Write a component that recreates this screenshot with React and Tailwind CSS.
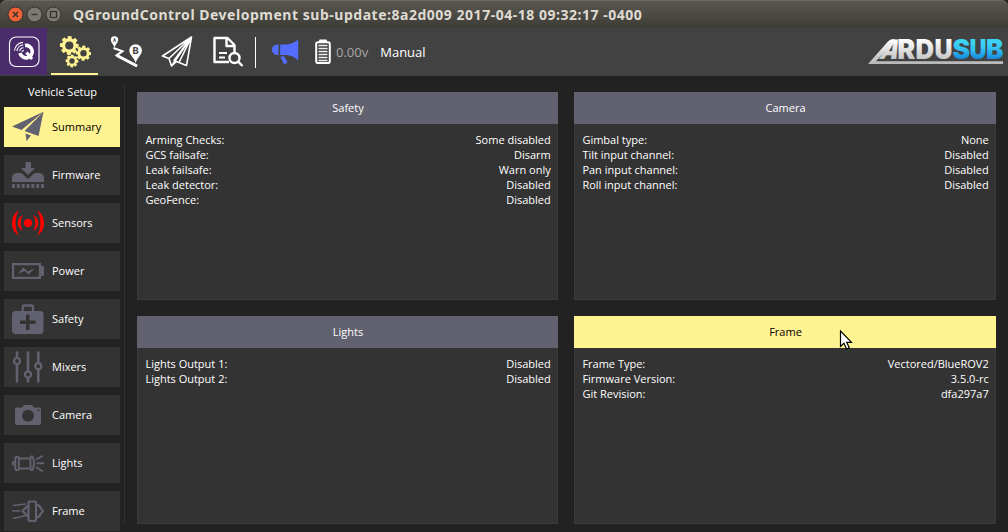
import React from "react";

const SLATE = "#62616f";

function AppLogo() {
  return (
    <svg width="32" height="32" viewBox="0 0 32 32" fill="none" stroke="#fff">
      <rect x="1.500" y="1" width="29.500" height="29.500" rx="6.500" strokeWidth="1.100" />
      <path d="M17 9.500a6.200 6.200 0 1 1-5 7.500" strokeWidth="3.600" />
      <path d="M18.500 16.500l5.500 6.500" strokeWidth="3.200" />
      <path d="M15.500 11.800a4 4 0 0 0-3.800 3.400M15.200 9a6.600 6.600 0 0 0-6.200 6M15 6.400a9 9 0 0 0-8.500 8.300M16 14.200a2 2 0 0 0-1.800 1.800" strokeWidth="1.100" />
    </svg>
  );
}

function Gear({ cx, cy, r, w, hole }) {
  const teeth = [0, 45, 90, 135];
  return (
    <g transform={`translate(${cx} ${cy})`}>
      {teeth.map((a) => (
        <rect key={a} x={-w / 2} y={-r} width={w} height={r * 2} rx="0.8" transform={`rotate(${a + 3})`} />
      ))}
      <circle r={r * 0.78} />
      <circle r={hole} fill="#424242" />
    </g>
  );
}

function Gears() {
  return (
    <svg width="32" height="32" viewBox="0 0 32 32" fill="#fff291">
      <Gear cx={10.3} cy={9.5} r={9.4} w={4} hole={4.1} />
      <Gear cx={24.5} cy={17.2} r={7.6} w={3.3} hole={3.2} />
      <Gear cx={13} cy={25} r={6.4} w={2.9} hole={2.7} />
    </svg>
  );
}

function PlanIcon() {
  return (
    <svg width="32" height="32" viewBox="0 0 32 32" fill="#fff">
      <path d="M4.500 11.500C4 9 .8 6.500 .8 4A3.700 3.700 0 0 1 8.200 4C8.200 6.500 5 9 4.500 11.500z" />
      <path d="M25.700 27C24.500 22 19.300 19 19.300 14.500A6.300 6.300 0 0 1 31.900 14.500C31.900 19 27 22 25.700 27z" />
      <path d="M3.500 12L12.500 15.200 6.500 19.300 27 30" fill="none" stroke="#fff" strokeWidth="2" />
      <path d="M7 19.500L27 30" fill="none" stroke="#fff" strokeWidth="2.800" />
      <text x="4.500" y="5.800" fontSize="4.500" textAnchor="middle" fontWeight="700" fill="#424242" fontFamily="Roboto, sans-serif">A</text>
      <text x="25.600" y="18" fontSize="9.500" textAnchor="middle" fontWeight="800" fill="#424242" fontFamily="Roboto, sans-serif">B</text>
    </svg>
  );
}

function FlyIcon() {
  return (
    <svg width="32" height="32" viewBox="0 0 32 32" fill="none" stroke="#fff" strokeWidth="1.600" strokeLinejoin="round">
      <path d="M30.500 1L1.500 20 8 22.500zM30.500 1L13 24.500 25.500 29.500zM8 22.500L10.500 30 30.500 1M10.500 30L15.500 25.500M30.500 1L18 26.500" />
    </svg>
  );
}

function AnalyzeIcon() {
  return (
    <svg width="32" height="32" viewBox="0 0 32 32" fill="none" stroke="#fff" strokeWidth="2.400">
      <path d="M17 26H2.500V2H15.500L22.500 9V16M14.500 2V10H22.500" strokeLinejoin="round" />
      <path d="M7 17H15M7 21.500H13" strokeWidth="1.800" />
      <circle cx="22.500" cy="22" r="5" />
      <path d="M26 25.500L30.500 30" />
    </svg>
  );
}

function Megaphone() {
  return (
    <svg width="28" height="26" viewBox="0 0 28 26" fill="#536dff">
      <path d="M6.500 5.500V16H5.200A5 5 0 0 1 5.200 5.500zM8.200 5.500H15C20 5 24 2.500 26.200 .3V21.500C24 19 20 16.500 15 16H8.200zM8.300 17.800L12 17.200 15.200 22.500 14.500 24.500 11.800 25z" />
    </svg>
  );
}

function BatteryLevel() {
  return (
    <svg width="16" height="26" viewBox="0 0 16 26">
      <path d="M4 1.500Q4 .5 5 .5H11Q12 .5 12 1.500V3H4z" fill="#fff" />
      <rect x="1.200" y="3.200" width="13.600" height="20.800" rx="1.800" fill="none" stroke="#fff" strokeWidth="2" />
      <path d="M3.500 6.500H12.500M3.500 9.500H12.500M3.500 12.500H12.500M3.500 15.500H12.500M3.500 18.500H12.500M3.500 21.500H12.500" stroke="#eee" strokeWidth="1.600" />
    </svg>
  );
}

const brandLetters = [
  ["R", 31.3, 18, "url(#silver)"],
  ["D", 49.6, 18.6, "url(#silver)"],
  ["U", 68.4, 18, "url(#silver)"],
  ["S", 86.6, 17.6, "url(#sea)"],
  ["U", 103.6, 17, "url(#sea)"],
  ["B", 120, 17.4, "url(#sea)"],
];

function Brand() {
  return (
    <svg width="138" height="44" viewBox="0 -8 138 44" fontFamily="Inter, sans-serif" fontSize="26.800" fontWeight="900">
      <defs>
        <linearGradient id="silver" gradientUnits="userSpaceOnUse" x1="0" y1="1" x2="0" y2="26">
          <stop offset="0" stopColor="#fff" />
          <stop offset="1" stopColor="#b8b8b8" />
        </linearGradient>
        <linearGradient id="sea" gradientUnits="userSpaceOnUse" x1="0" y1="1" x2="0" y2="21">
          <stop offset="0.200" stopColor="#3cd4f5" />
          <stop offset="0.550" stopColor="#2fbcf0" />
          <stop offset="1" stopColor="#1688dc" />
        </linearGradient>
      </defs>
      <path d="M2 26L22 3.500Q24 1.300 27 1.300H29L10 23.200H137V26z" fill="url(#silver)" />
      <text x="20.200" y="20.900" textLength="18.500" lengthAdjust="spacingAndGlyphs" transform="skewX(-21)" fill="url(#silver)">A</text>
      {brandLetters.map(([letter, x, width, fill]) => (
        <text key={x} x={x} y="20.900" textLength={width} lengthAdjust="spacingAndGlyphs" fill={fill}>
          {letter}
        </text>
      ))}
    </svg>
  );
}

const icons = {
  Summary: (
    <path d="M31.500 .8L0 15.500 9.500 19zM31.500 .8L12.500 20 26.500 25zM13.500 22.500L19 24.500 14.500 30z" fill={SLATE} />
  ),
  Firmware: (
    <g fill={SLATE} transform="translate(0 1)">
      <path d="M13.500 2H19V8H23L16 15 9 8H13.500z" />
      <path d="M4 13H9.500L16 19 22.500 13H28Q32 14 32 18V22H0V18Q0 14 4 13zM0 24H3V28H0zM4.800 24H7.800V28H4.800zM9.700 24H12.700V28H9.700zM14.500 24H17.500V28H14.500zM19.300 24H22.300V28H19.300zM24.200 24H27.200V28H24.200zM29 24H32V28H29z" />
    </g>
  ),
  Sensors: (
    <g fill="#f00">
      <circle cx="16" cy="16" r="4.200" />
      <path d="M11 8C4 11 4 21 11 24 8 20 8 12 11 8zM21 8C28 11 28 21 21 24 24 20 24 12 21 8zM7 3C-2.500 9 -2.500 23 7 29 2.500 22 2.500 10 7 3zM25 3C34.500 9 34.500 23 25 29 29.500 22 29.500 10 25 3z" />
    </g>
  ),
  Power: (
    <g fill={SLATE}>
      <path d="M0 8H29V11H31Q32 11 32 12V20Q32 21 31 21H29V24H0zM2.200 10.200V21.800H26.800V10.200z" fillRule="evenodd" />
      <path d="M5.500 19L11.500 12.500 15.500 16.500 22.500 13.500 16.500 19.500 12.500 16z" />
    </g>
  ),
  Safety: (
    <g>
      <path d="M10.700 8V4Q10.700 2.500 12.200 2.500H19.500Q21 2.500 21 4V8" fill="none" stroke={SLATE} strokeWidth="2.300" />
      <rect x="0" y="8" width="31.500" height="23" rx="3.500" fill={SLATE} />
      <path d="M14 11.500H17.500V17.500H23.500V21H17.500V27H14V21H8V17.500H14z" fill="#333" />
    </g>
  ),
  Mixers: (
    <g fill="none" stroke={SLATE} strokeWidth="2.600" strokeLinecap="round">
      <path d="M5 1.500V6.500M5 13.500V30.500M16 1.500V20M16 27V30.500M26.300 1.500V12M26.300 18.500V30.500" />
      <circle cx="5" cy="10" r="3" strokeWidth="2.200" />
      <circle cx="16" cy="23.500" r="3" strokeWidth="2.200" />
      <circle cx="26.300" cy="15.200" r="3" strokeWidth="2.200" />
    </g>
  ),
  Camera: (
    <g>
      <path d="M5 8.500H10L12 6H20L22 8.500H27Q29 8.500 29 10.500V24Q29 26 27 26H5Q3 26 3 24V10.500Q3 8.500 5 8.500z" fill={SLATE} />
      <circle cx="16" cy="16.800" r="6" fill="#333" />
      <circle cx="26.500" cy="11.300" r="1" fill="#333" />
    </g>
  ),
  Lights: (
    <g fill="none" stroke={SLATE} strokeWidth="1.900">
      <path d="M0 16.300H2.500" strokeWidth="4" />
      <rect x="3.300" y="10" width="3.500" height="13" rx="1" />
      <path d="M7 11.500H18.500M7 21.500H18.500M18.500 9.500V23M18.500 9.500H20.500Q23.500 16.500 20.500 23H18.500" />
      <path d="M24 12.500L30.800 8.800M24.500 16.300H32M24 20L30.800 24.500" />
    </g>
  ),
  Frame: (
    <g fill="none" stroke={SLATE} strokeWidth="2.200">
      <rect x="16.500" y="6.500" width="7.500" height="19.500" rx="1" />
      <path d="M16 10.500L10.500 16 16 21.500M25 10Q28 10 28.500 13L31 16 28.500 19Q28 22 25 22" />
      <path d="M1 10.500L14 9M0 16H8M1 23.500L14 20.500" strokeWidth="1.600" />
    </g>
  ),
};

const navItems = ["Summary", "Firmware", "Sensors", "Power", "Safety", "Mixers", "Camera", "Lights", "Frame"];

function NavButton({ name, active }) {
  return (
    <button
      className={`flex h-10 w-[116px] shrink-0 items-center gap-2 pl-2 ${
        active ? "bg-[#fff291] text-black" : "bg-[#333333] text-white"
      }`}
    >
      <svg width="32" height="32" viewBox="0 0 32 32">{icons[name]}</svg>
      <span className="pb-0.5">{name}</span>
    </button>
  );
}

function Card({ title, rows, active }) {
  return (
    <section className="flex flex-col border border-[#3b3b3b] bg-[#333333]">
      <h2
        className={`-mx-px -mt-px flex h-8 shrink-0 items-center justify-center pb-px pl-px ${
          active ? "bg-[#fff291] text-black" : "bg-[#62616f] text-white"
        }`}
      >
        {title}
      </h2>
      <dl className="pt-2 pr-[6.3px] pl-[7.4px]">
        {rows.map(([label, value]) => (
          <div key={label} className="flex h-[15px] items-center justify-between">
            <dt>{label}</dt>
            <dd>{value}</dd>
          </div>
        ))}
      </dl>
    </section>
  );
}

const cards = [
  {
    title: "Safety",
    rows: [
      ["Arming Checks:", "Some disabled"],
      ["GCS failsafe:", "Disarm"],
      ["Leak failsafe:", "Warn only"],
      ["Leak detector:", "Disabled"],
      ["GeoFence:", "Disabled"],
    ],
  },
  {
    title: "Camera",
    rows: [
      ["Gimbal type:", "None"],
      ["Tilt input channel:", "Disabled"],
      ["Pan input channel:", "Disabled"],
      ["Roll input channel:", "Disabled"],
    ],
  },
  {
    title: "Lights",
    rows: [
      ["Lights Output 1:", "Disabled"],
      ["Lights Output 2:", "Disabled"],
    ],
  },
  {
    title: "Frame",
    active: true,
    rows: [
      ["Frame Type:", "Vectored/BlueROV2"],
      ["Firmware Version:", "3.5.0-rc"],
      ["Git Revision:", "dfa297a7"],
    ],
  },
];

function WindowButtons() {
  return (
    <svg width="56" height="18" viewBox="0 0 56 18" fill="none" stroke="#33322e">
      <circle cx="8.500" cy="8.500" r="7.500" fill="#ee6238" />
      <path d="M6 6l5 5M11 6l-5 5" strokeWidth="1.400" />
      <circle cx="27.500" cy="8.500" r="7.500" fill="#7b7971" />
      <path d="M24.500 8.500h6" strokeWidth="1.300" />
      <circle cx="46.500" cy="8.500" r="7.500" fill="#7b7971" />
      <rect x="43.500" y="5.500" width="6" height="6" strokeWidth="1.200" />
    </svg>
  );
}

export default function App() {
  return (
    <div className="relative flex h-[532px] w-[1008px] flex-col overflow-hidden bg-[#222222] font-['Open_Sans','Noto_Sans',sans-serif] text-[11px] leading-[15px] text-white">
      <header className="flex h-7 shrink-0 items-center rounded-t-md border-t border-[#6a6860] bg-linear-to-b from-[#59574f] to-[#3d3c37] pl-[7px]">
        <WindowButtons />
        <h1 className="ml-[10px] whitespace-nowrap font-['Noto_Sans',sans-serif] text-[14px] font-bold tracking-[0.52px] text-[#dfdbd2]">
          QGroundControl Development sub-update:8a2d009 2017-04-18 09:32:17 -0400
        </h1>
      </header>

      <nav className="flex h-12 shrink-0 items-center bg-[#424242]">
        <div className="flex h-[47px] w-[47px] items-center self-start bg-[#4a2c6d] pl-2">
          <AppLogo />
        </div>
        <div className="ml-1 flex h-[47px] w-[47px] flex-col items-center justify-between self-start pt-2">
          <Gears />
          <div className="h-0.5 w-full bg-[#fff291]" />
        </div>
        <div className="ml-3"><PlanIcon /></div>
        <div className="ml-[19px]"><FlyIcon /></div>
        <div className="ml-[19px]"><AnalyzeIcon /></div>
        <div className="ml-[11px] h-[31px] w-px bg-white" />
        <div className="ml-4"><Megaphone /></div>
        <div className="ml-[15px]"><BatteryLevel /></div>
        <span className="ml-[5px] text-[13px] text-[#a8a8a8]">0.00v</span>
        <span className="ml-3 text-[13px]">Manual</span>
        <div className="mr-[4px] ml-auto"><Brand /></div>
      </nav>

      <main className="flex min-h-0 flex-1">
        <aside className="flex w-[124px] shrink-0 flex-col items-start gap-2 pt-2 pl-1">
          <div className="w-[116px] pl-px text-center">Vehicle Setup</div>
          {navItems.map((name, i) => (
            <NavButton key={name} name={name} active={i === 0} />
          ))}
        </aside>
        <div className="mt-2 mb-2 w-px bg-[#333333]" />
        <div className="grid flex-1 grid-cols-[421px_422px] grid-rows-[208px_208px] gap-4 pt-4 pl-3">
          {cards.map((card) => (
            <Card key={card.title} {...card} />
          ))}
        </div>
      </main>

      <svg className="absolute top-[330px] left-[839px]" width="14" height="22" viewBox="0 0 14 22">
        <path d="M1.500 1V16.500L5 13.300 7.500 19 10.200 17.800 7.800 12.300H12.500z" fill="#fff" stroke="#000" strokeWidth="1.200" />
      </svg>
    </div>
  );
}
